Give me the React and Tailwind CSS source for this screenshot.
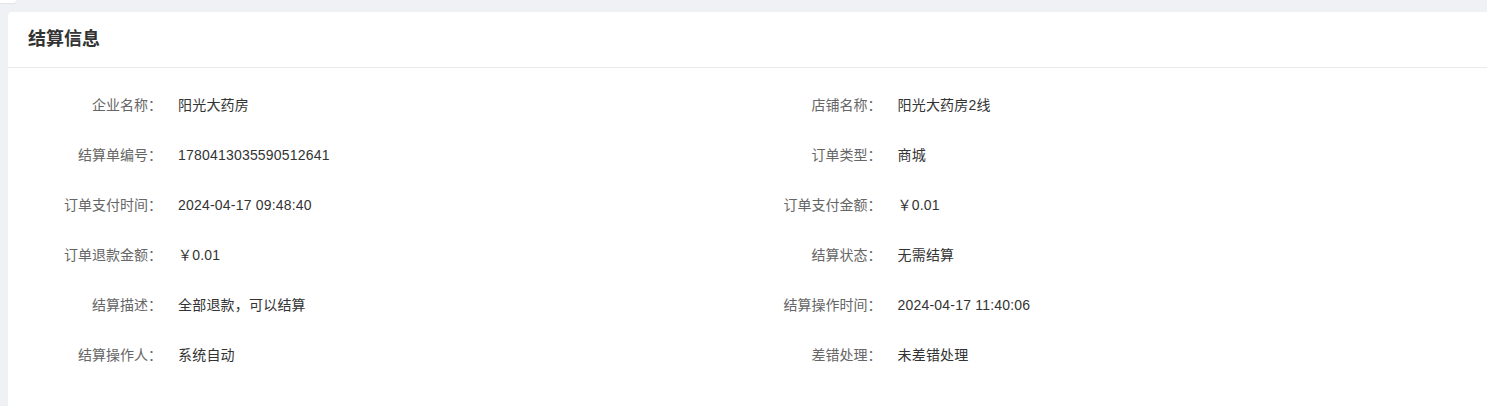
const ROWS = [
  ['企业名称：', '阳光大药房', '店铺名称：', '阳光大药房2线'],
  ['结算单编号：', '1780413035590512641', '订单类型：', '商城'],
  ['订单支付时间：', '2024-04-17 09:48:40', '订单支付金额：', '￥0.01'],
  ['订单退款金额：', '￥0.01', '结算状态：', '无需结算'],
  ['结算描述：', '全部退款，可以结算', '结算操作时间：', '2024-04-17 11:40:06'],
  ['结算操作人：', '系统自动', '差错处理：', '未差错处理'],
]

function Field({ label, value }) {
  return (
    <div className="flex items-center h-[50px] text-[14px]">
      <span className="w-[134px] shrink-0 text-right text-[#666]">{label}</span>
      <span className="ml-4 text-[#333] tracking-[0.2px]">{value}</span>
    </div>
  )
}

export default function App() {
  return (
    <div
      className="min-h-[406px] bg-[#f0f1f5] flex flex-col"
      style={{ fontFamily: '"Liberation Sans", "Noto Sans CJK SC", sans-serif' }}
    >
      <div className="h-[12px] shrink-0">
        <div className="w-[16px] h-[3px] bg-white rounded-br shadow-[0_1px_2px_rgba(0,0,0,0.06)]" />
      </div>
      <div className="ml-2 flex-1 bg-white rounded-tl">
        <div className="h-[56px] flex items-center px-5 border-b border-[#e8eaec]">
          <h2 className="text-[18px] font-bold text-[#333]">结算信息</h2>
        </div>
        <div className="px-5 pt-[12px] pb-[26px] grid grid-cols-2">
          {ROWS.map(([l1, v1, l2, v2]) => [
            <Field key={l1} label={l1} value={v1} />,
            <Field key={l2} label={l2} value={v2} />,
          ])}
        </div>
      </div>
    </div>
  )
}
